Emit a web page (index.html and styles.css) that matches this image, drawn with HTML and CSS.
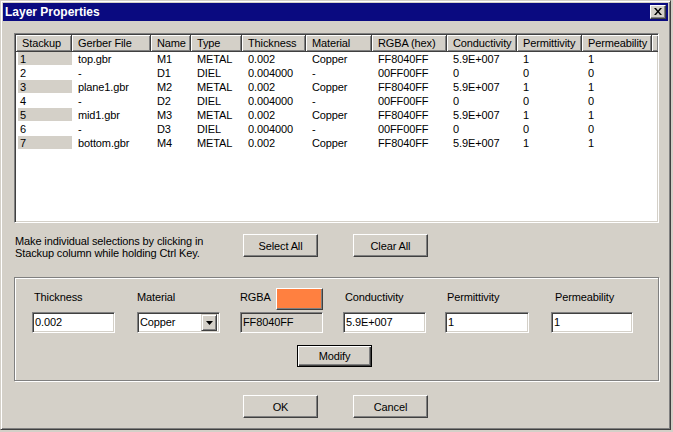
FILE: index.html
```html
<!DOCTYPE html>
<html>
<head>
<meta charset="utf-8">
<link rel="stylesheet" href="styles.css">
</head>
<body>
<div class="window">
  <div class="titlebar">
    <span class="title">Layer Properties</span>
    <div class="close"><svg width="8" height="7" viewBox="0 0 8 7"><path d="M0 0h2l2 2.5L6 0h2L5 3.5 8 7H6L4 4.5 2 7H0l3-3.5z" fill="#000"/></svg></div>
  </div>
  <div class="content">
    <div class="list">
      <div class="lv-row lv-head">
        <div class="th">Stackup</div>
        <div class="th">Gerber File</div>
        <div class="th">Name</div>
        <div class="th">Type</div>
        <div class="th">Thickness</div>
        <div class="th">Material</div>
        <div class="th">RGBA (hex)</div>
        <div class="th">Conductivity</div>
        <div class="th">Permittivity</div>
        <div class="th">Permeability</div>
        <div class="th"></div>
      </div>
      <div class="lv-row sel"><div class="td first"><span>1</span></div><div class="td">top.gbr</div><div class="td">M1</div><div class="td">METAL</div><div class="td">0.002</div><div class="td">Copper</div><div class="td">FF8040FF</div><div class="td">5.9E+007</div><div class="td">1</div><div class="td">1</div></div>
      <div class="lv-row"><div class="td first"><span>2</span></div><div class="td">-</div><div class="td">D1</div><div class="td">DIEL</div><div class="td">0.004000</div><div class="td">-</div><div class="td">00FF00FF</div><div class="td">0</div><div class="td">0</div><div class="td">0</div></div>
      <div class="lv-row sel"><div class="td first"><span>3</span></div><div class="td">plane1.gbr</div><div class="td">M2</div><div class="td">METAL</div><div class="td">0.002</div><div class="td">Copper</div><div class="td">FF8040FF</div><div class="td">5.9E+007</div><div class="td">1</div><div class="td">1</div></div>
      <div class="lv-row"><div class="td first"><span>4</span></div><div class="td">-</div><div class="td">D2</div><div class="td">DIEL</div><div class="td">0.004000</div><div class="td">-</div><div class="td">00FF00FF</div><div class="td">0</div><div class="td">0</div><div class="td">0</div></div>
      <div class="lv-row sel"><div class="td first"><span>5</span></div><div class="td">mid1.gbr</div><div class="td">M3</div><div class="td">METAL</div><div class="td">0.002</div><div class="td">Copper</div><div class="td">FF8040FF</div><div class="td">5.9E+007</div><div class="td">1</div><div class="td">1</div></div>
      <div class="lv-row"><div class="td first"><span>6</span></div><div class="td">-</div><div class="td">D3</div><div class="td">DIEL</div><div class="td">0.004000</div><div class="td">-</div><div class="td">00FF00FF</div><div class="td">0</div><div class="td">0</div><div class="td">0</div></div>
      <div class="lv-row sel"><div class="td first"><span>7</span></div><div class="td">bottom.gbr</div><div class="td">M4</div><div class="td">METAL</div><div class="td">0.002</div><div class="td">Copper</div><div class="td">FF8040FF</div><div class="td">5.9E+007</div><div class="td">1</div><div class="td">1</div></div>
    </div>

    <div class="actions">
      <p class="note">Make individual selections by clicking in<br>Stackup column while holding Ctrl Key.</p>
      <div class="btn">Select All</div>
      <div class="btn gap">Clear All</div>
    </div>

    <div class="group">
      <div class="fields">
        <div class="field">
          <div class="lbl off2">Thickness</div>
          <div class="edit">0.002</div>
        </div>
        <div class="field">
          <div class="lbl">Material</div>
          <div class="edit combo"><span>Copper</span><div class="drop"><svg width="7" height="4" viewBox="0 0 7 4"><path d="M0 0h7L3.5 4z" fill="#000"/></svg></div></div>
        </div>
        <div class="field">
          <div class="lbl rgba"><span>RGBA</span><div class="swatch"></div></div>
          <div class="edit readonly">FF8040FF</div>
        </div>
        <div class="field">
          <div class="lbl off2">Conductivity</div>
          <div class="edit">5.9E+007</div>
        </div>
        <div class="field">
          <div class="lbl off2">Permittivity</div>
          <div class="edit wide">1</div>
        </div>
        <div class="field">
          <div class="lbl off4">Permeability</div>
          <div class="edit narrow">1</div>
        </div>
      </div>
      <div class="btn default modify">Modify</div>
    </div>

    <div class="footer">
      <div class="btn">OK</div>
      <div class="btn gap">Cancel</div>
    </div>
  </div>
</div>
</body>
</html>
```

FILE: styles.css
```css
html, body {
  margin: 0;
  padding: 0;
  background: #d4d0c8;
}
body {
  font-family: "Liberation Sans", Arial, sans-serif;
  font-size: 11px;
  letter-spacing: -0.12px;
  color: #000;
}
.window {
  width: 671px;
  height: 430px;
  box-sizing: border-box;
  background: #d4d0c8;
  border: 1px solid;
  border-color: #d4d0c8 #404040 #404040 #d4d0c8;
  box-shadow: inset 1px 1px #fff, inset -1px -1px #808080;
  padding: 2px;
}
.titlebar {
  height: 18px;
  background: #0a0a80;
  display: flex;
  align-items: center;
  justify-content: space-between;
}
.title {
  color: #fff;
  font-weight: bold;
  font-size: 12px;
  letter-spacing: 0;
  padding-left: 2px;
}
.close {
  width: 14px;
  height: 12px;
  margin-right: 2px;
  background: #d4d0c8;
  border: 1px solid;
  border-color: #fff #404040 #404040 #fff;
  box-shadow: inset -1px -1px #808080;
  display: flex;
  align-items: center;
  justify-content: center;
}
.close svg { display: block; margin: 0 1px 1px 0; }
.content {
  padding: 12px 0 0 11px;
}
.list {
  width: 645px;
  height: 190px;
  box-sizing: border-box;
  background: #fff;
  border: 1px solid;
  border-color: #808080 #fff #fff #808080;
  box-shadow: inset 1px 1px #404040, inset -1px -1px #d4d0c8;
  padding: 1px;
  overflow: hidden;
}
.lv-row {
  display: grid;
  grid-template-columns: 56px 79px 40px 51px 64px 66px 75px 70px 65px 70px 5px;
  height: 14px;
  line-height: 14px;
  white-space: nowrap;
}
.lv-head {
  height: 17px;
  line-height: 16px;
}
.th {
  background: #d4d0c8;
  border-right: 1px solid #404040;
  border-bottom: 1px solid #404040;
  box-shadow: inset 1px 1px #fff, inset -1px -1px #808080;
  padding-left: 6px;
  overflow: hidden;
}
.td {
  padding-left: 6px;
  overflow: hidden;
}
.td.first {
  padding-left: 2px;
}
.td.first span {
  display: block;
  height: 13px;
  line-height: 14px;
  padding-left: 2px;
}
.sel .td.first span {
  background: #d4d0c8;
}
.actions {
  display: flex;
  align-items: flex-start;
  margin-top: 11px;
  height: 23px;
}
.note {
  margin: 0 0 0 1px;
  width: 228px;
  line-height: 12px;
  padding-top: 1px;
}
.btn {
  width: 75px;
  height: 23px;
  box-sizing: border-box;
  background: #d4d0c8;
  border: 1px solid;
  border-color: #fff #404040 #404040 #fff;
  box-shadow: inset -1px -1px #808080;
  display: flex;
  align-items: center;
  justify-content: center;
}
.btn.gap { margin-left: 35px; }
.btn.default {
  border-color: #000;
  box-shadow: inset 1px 1px #fff, inset -1px -1px #404040, inset -2px -2px #808080;
}
.group {
  margin-top: 20px;
  width: 645px;
  height: 104px;
  box-sizing: border-box;
  border: 1px solid #808080;
  box-shadow: inset 1px 1px #fff, 1px 1px #fff;
  padding: 10px 0 0 17px;
}
.fields {
  display: grid;
  grid-template-columns: 105px 103px 103px 102px 106px 82px;
}
.field {
  display: flex;
  flex-direction: column;
}
.lbl {
  height: 22px;
  box-sizing: border-box;
  padding-top: 3px;
  line-height: 13px;
}
.lbl.off2 { padding-left: 2px; }
.lbl.off4 { padding-left: 4px; }
.lbl.rgba {
  width: 83px;
  display: flex;
  justify-content: space-between;
  align-items: flex-start;
  padding-top: 0;
}
.lbl.rgba span { padding-top: 3px; }
.swatch {
  width: 47px;
  height: 22px;
  box-sizing: border-box;
  background: #ff8040;
  border: 1px solid;
  border-color: #fff #404040 #404040 #fff;
  box-shadow: inset -1px -1px #808080;
}
.edit {
  margin-top: 2px;
  width: 83px;
  height: 21px;
  box-sizing: border-box;
  background: #fff;
  border: 1px solid;
  border-color: #808080 #fff #fff #808080;
  box-shadow: inset 1px 1px #404040, inset -1px -1px #d4d0c8;
  padding: 0 0 0 2px;
  line-height: 19px;
  white-space: nowrap;
}
.edit.wide { width: 84px; }
.edit.narrow { width: 82px; }
.edit.readonly { background: #d4d0c8; }
.combo {
  display: flex;
  justify-content: space-between;
  align-items: center;
  padding-right: 2px;
}
.drop {
  width: 16px;
  height: 17px;
  box-sizing: border-box;
  background: #d4d0c8;
  border: 1px solid;
  border-color: #d4d0c8 #404040 #404040 #d4d0c8;
  box-shadow: inset 1px 1px #fff, inset -1px -1px #808080;
  display: flex;
  align-items: center;
  justify-content: center;
}
.drop svg { display: block; }
.modify {
  margin: 12px 0 0 265px;
  height: 22px;
}
.footer {
  display: flex;
  margin: 14px 0 0 229px;
}
```
